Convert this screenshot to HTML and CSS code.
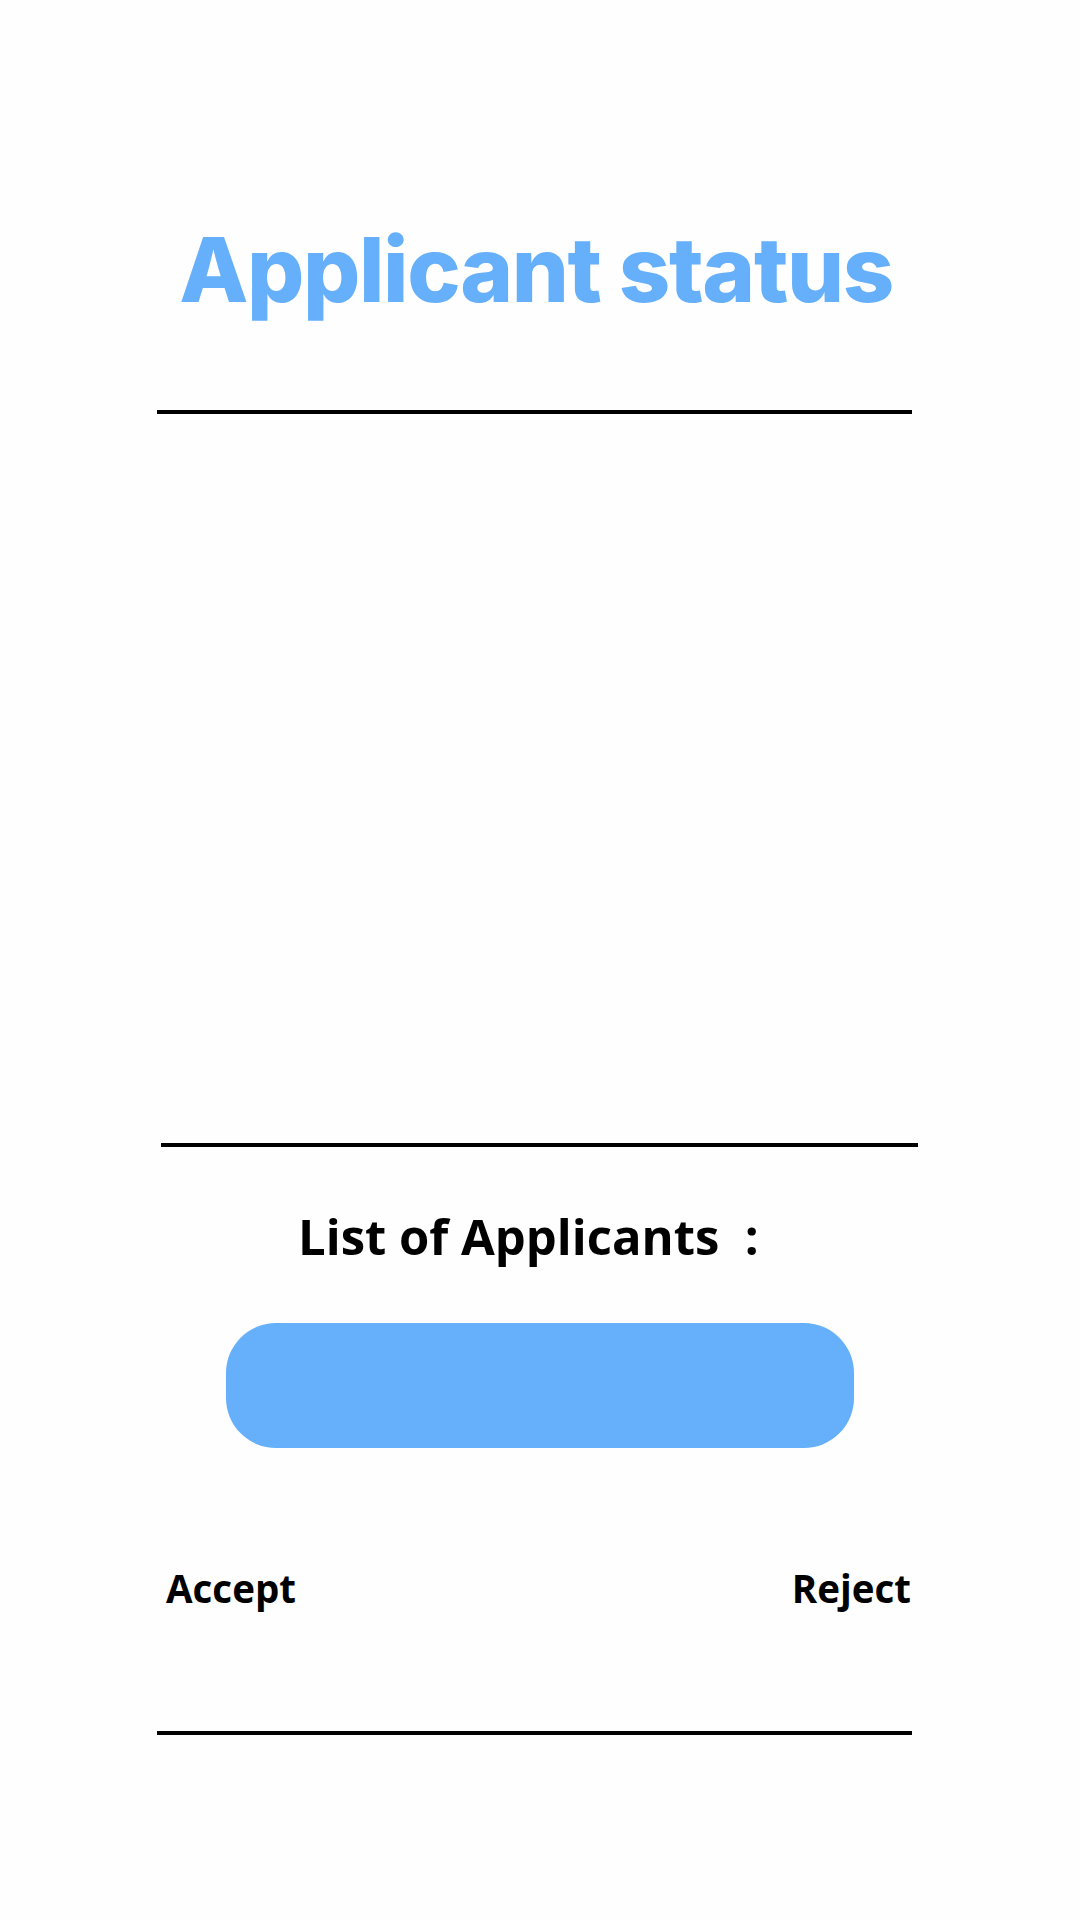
FILE: index.html
```html
<!DOCTYPE html>
<html lang="en">
<head>
<meta charset="utf-8">
<title>Applicant status</title>
<link rel="stylesheet" href="styles.css">
</head>
<body>
<main class="screen">
  <h1 class="title">Applicant status</h1>
  <div class="rule rule-top"></div>
  <section class="panel"></section>
  <div class="rule rule-mid"></div>
  <h2 class="list-heading">List of Applicants&nbsp;&nbsp;:</h2>
  <div class="applicant-pill"></div>
  <div class="actions">
    <span class="action">Accept</span>
    <span class="action">Reject</span>
  </div>
  <div class="rule rule-bottom"></div>
</main>
</body>
</html>
```

FILE: styles.css
```css
html, body {
  margin: 0;
  padding: 0;
  background: #fefefe;
}

.screen {
  width: 1080px;
  height: 1920px;
  display: flex;
  flex-direction: column;
  font-family: "Open Sans", "Noto Sans", sans-serif;
  color: #000;
}

.title {
  margin: 225px 0 0 0;
  padding-right: 8px;
  font-family: Inter, "Noto Sans", sans-serif;
  font-weight: 800;
  font-size: 90px;
  line-height: 89px;
  letter-spacing: -1.4px;
  color: #66b0fb;
  text-align: center;
}

.rule {
  height: 4px;
  background: #000;
}

.rule-top {
  margin: 96px 0 0 157px;
  width: 755px;
}

.panel {
  height: 729px;
}

.rule-mid {
  margin-left: 161px;
  width: 757px;
}

.list-heading {
  margin: 55px 0 0 298px;
  font-size: 49px;
  font-weight: 700;
  line-height: 68px;
}

.applicant-pill {
  margin: 53px 0 0 226px;
  width: 628px;
  height: 125px;
  border-radius: 50px;
  background: #66b0fb;
}

.actions {
  margin: 115px 0 0 166px;
  width: 745px;
  display: flex;
  justify-content: space-between;
  font-size: 38.5px;
  font-weight: 700;
  line-height: 50px;
}

.rule-bottom {
  margin: 118px 0 0 157px;
  width: 755px;
}
```
